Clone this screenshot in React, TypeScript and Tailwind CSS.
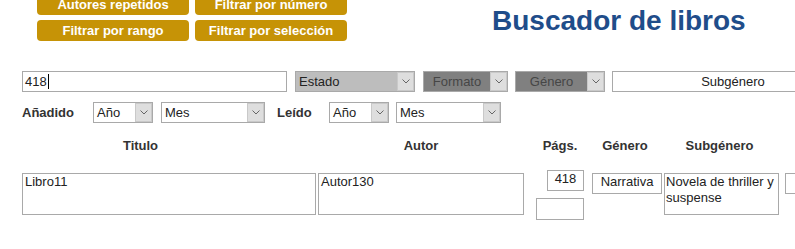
import React from 'react';

const Chevron = () => (
  <svg width="8" height="5" viewBox="0 0 8 5" className="block">
    <polyline points="0.5,0.5 4,4 7.5,0.5" fill="none" stroke="#666" strokeWidth="1" />
  </svg>
);

type SelectProps = {
  label: string;
  width: string;
  bg?: string;
  center?: boolean;
  textColor?: string;
};

// fake windows-ish select box
const FakeSelect = ({ label, width, bg = 'bg-white', center, textColor = 'text-[#222]' }: SelectProps) => (
  <div className={`flex h-[21px] border border-[#a9a9a9] ${width} ${bg}`}>
    <div className={`flex-1 px-[3px] leading-[19px] ${textColor} ${center ? 'text-center' : ''}`}>{label}</div>
    <div className="flex w-[17px] items-center justify-center border border-[#c9c9c9] bg-[#dedede]">
      <Chevron />
    </div>
  </div>
);

const buttons = ['Autores repetidos', 'Filtrar por número', 'Filtrar por rango', 'Filtrar por selección'];

const App = () => {
  return (
    <div className="h-[249px] w-[795px] overflow-hidden bg-white font-['Liberation_Sans',Arial,sans-serif] text-[13px] text-[#333]">
      {/* top: buttons + title */}
      <div className="-mt-[6px] flex">
        <div className="ml-[37px] grid grid-cols-[152px_152px] gap-x-[6px] gap-y-[5px]">
          {buttons.map((b) => (
            <div
              key={b}
              className="h-[21px] rounded-[4px] bg-[#c69306] text-center text-[13px] font-bold leading-[21px] text-white"
            >
              {b}
            </div>
          ))}
        </div>
        <h1 className="ml-[145px] mt-[11px] whitespace-nowrap text-[28px] font-bold leading-[31px] text-[#1f4d8a]">
          Buscador de libros
        </h1>
      </div>

      {/* filters row 1 */}
      <div className="mt-[30px] flex whitespace-nowrap pl-[22px]">
        <div className="h-[21px] w-[265px] shrink-0 border border-[#a9a9a9] px-[2px] leading-[19px] text-[#222]">
          418<span className="ml-px inline-block h-[15px] w-px bg-black align-[-3px]" />
        </div>
        <div className="ml-[8px] shrink-0">
          <FakeSelect label="Estado" width="w-[120px]" bg="bg-[#bdbdbd]" />
        </div>
        <div className="ml-[8px] shrink-0">
          <FakeSelect label="Formato" width="w-[85px]" bg="bg-[#808080]" center textColor="text-[#464646]" />
        </div>
        <div className="ml-[7px] shrink-0">
          <FakeSelect label="Género" width="w-[90px]" bg="bg-[#808080]" center textColor="text-[#464646]" />
        </div>
        <div className="ml-[7px] h-[21px] w-[242px] shrink-0 border border-[#a9a9a9] text-center leading-[19px] text-[#222]">
          Subgénero
        </div>
      </div>

      {/* filters row 2 */}
      <div className="mt-[10px] flex items-center whitespace-nowrap pl-[22px]">
        <span className="w-[71px] shrink-0 font-bold">Añadido</span>
        <FakeSelect label="Año" width="w-[60px]" />
        <div className="ml-[8px]">
          <FakeSelect label="Mes" width="w-[104px]" />
        </div>
        <span className="ml-[12px] w-[52px] shrink-0 font-bold">Leído</span>
        <FakeSelect label="Año" width="w-[60px]" />
        <div className="ml-[7px]">
          <FakeSelect label="Mes" width="w-[105px]" />
        </div>
      </div>

      {/* table header */}
      <div className="mt-[15px] flex h-[15px] whitespace-nowrap pl-[22px] font-bold leading-[15px]">
        <div className="w-[237px] text-center">Titulo</div>
        <div className="ml-[59px] w-[206px] text-center">Autor</div>
        <div className="ml-[10px] w-[52px] text-center">Págs.</div>
        <div className="ml-[4px] w-[70px] text-center">Género</div>
        <div className="ml-[2px] w-[115px] text-center">Subgénero</div>
      </div>

      {/* table row */}
      <div className="mt-[17px] flex items-start whitespace-nowrap pl-[22px] text-[#222]">
        <div className="mt-[3px] h-[42px] w-[294px] shrink-0 border border-[#a9a9a9] px-[2px] leading-[16px]">Libro11</div>
        <div className="ml-[2px] mt-[3px] h-[42px] w-[206px] shrink-0 border border-[#a9a9a9] px-[2px] leading-[16px]">
          Autor130
        </div>
        <div className="ml-[12px] flex w-[48px] shrink-0 flex-col items-end">
          <div className="h-[21px] w-[37px] border border-[#a9a9a9] text-center leading-[15px]">418</div>
          <div className="mt-[7px] h-[22px] w-[48px] border border-[#a9a9a9]" />
        </div>
        <div className="ml-[8px] mt-[3px] h-[21px] w-[70px] shrink-0 border border-[#a9a9a9] text-center leading-[15px]">
          Narrativa
        </div>
        <div className="ml-[2px] mt-[3px] h-[42px] w-[115px] shrink-0 whitespace-normal border border-[#a9a9a9] px-[1px] leading-[16px]">
          Novela de thriller y suspense
        </div>
        <div className="ml-[6px] mt-[3px] h-[21px] w-[60px] shrink-0 border border-[#a9a9a9]" />
      </div>
    </div>
  );
};

export default App;
